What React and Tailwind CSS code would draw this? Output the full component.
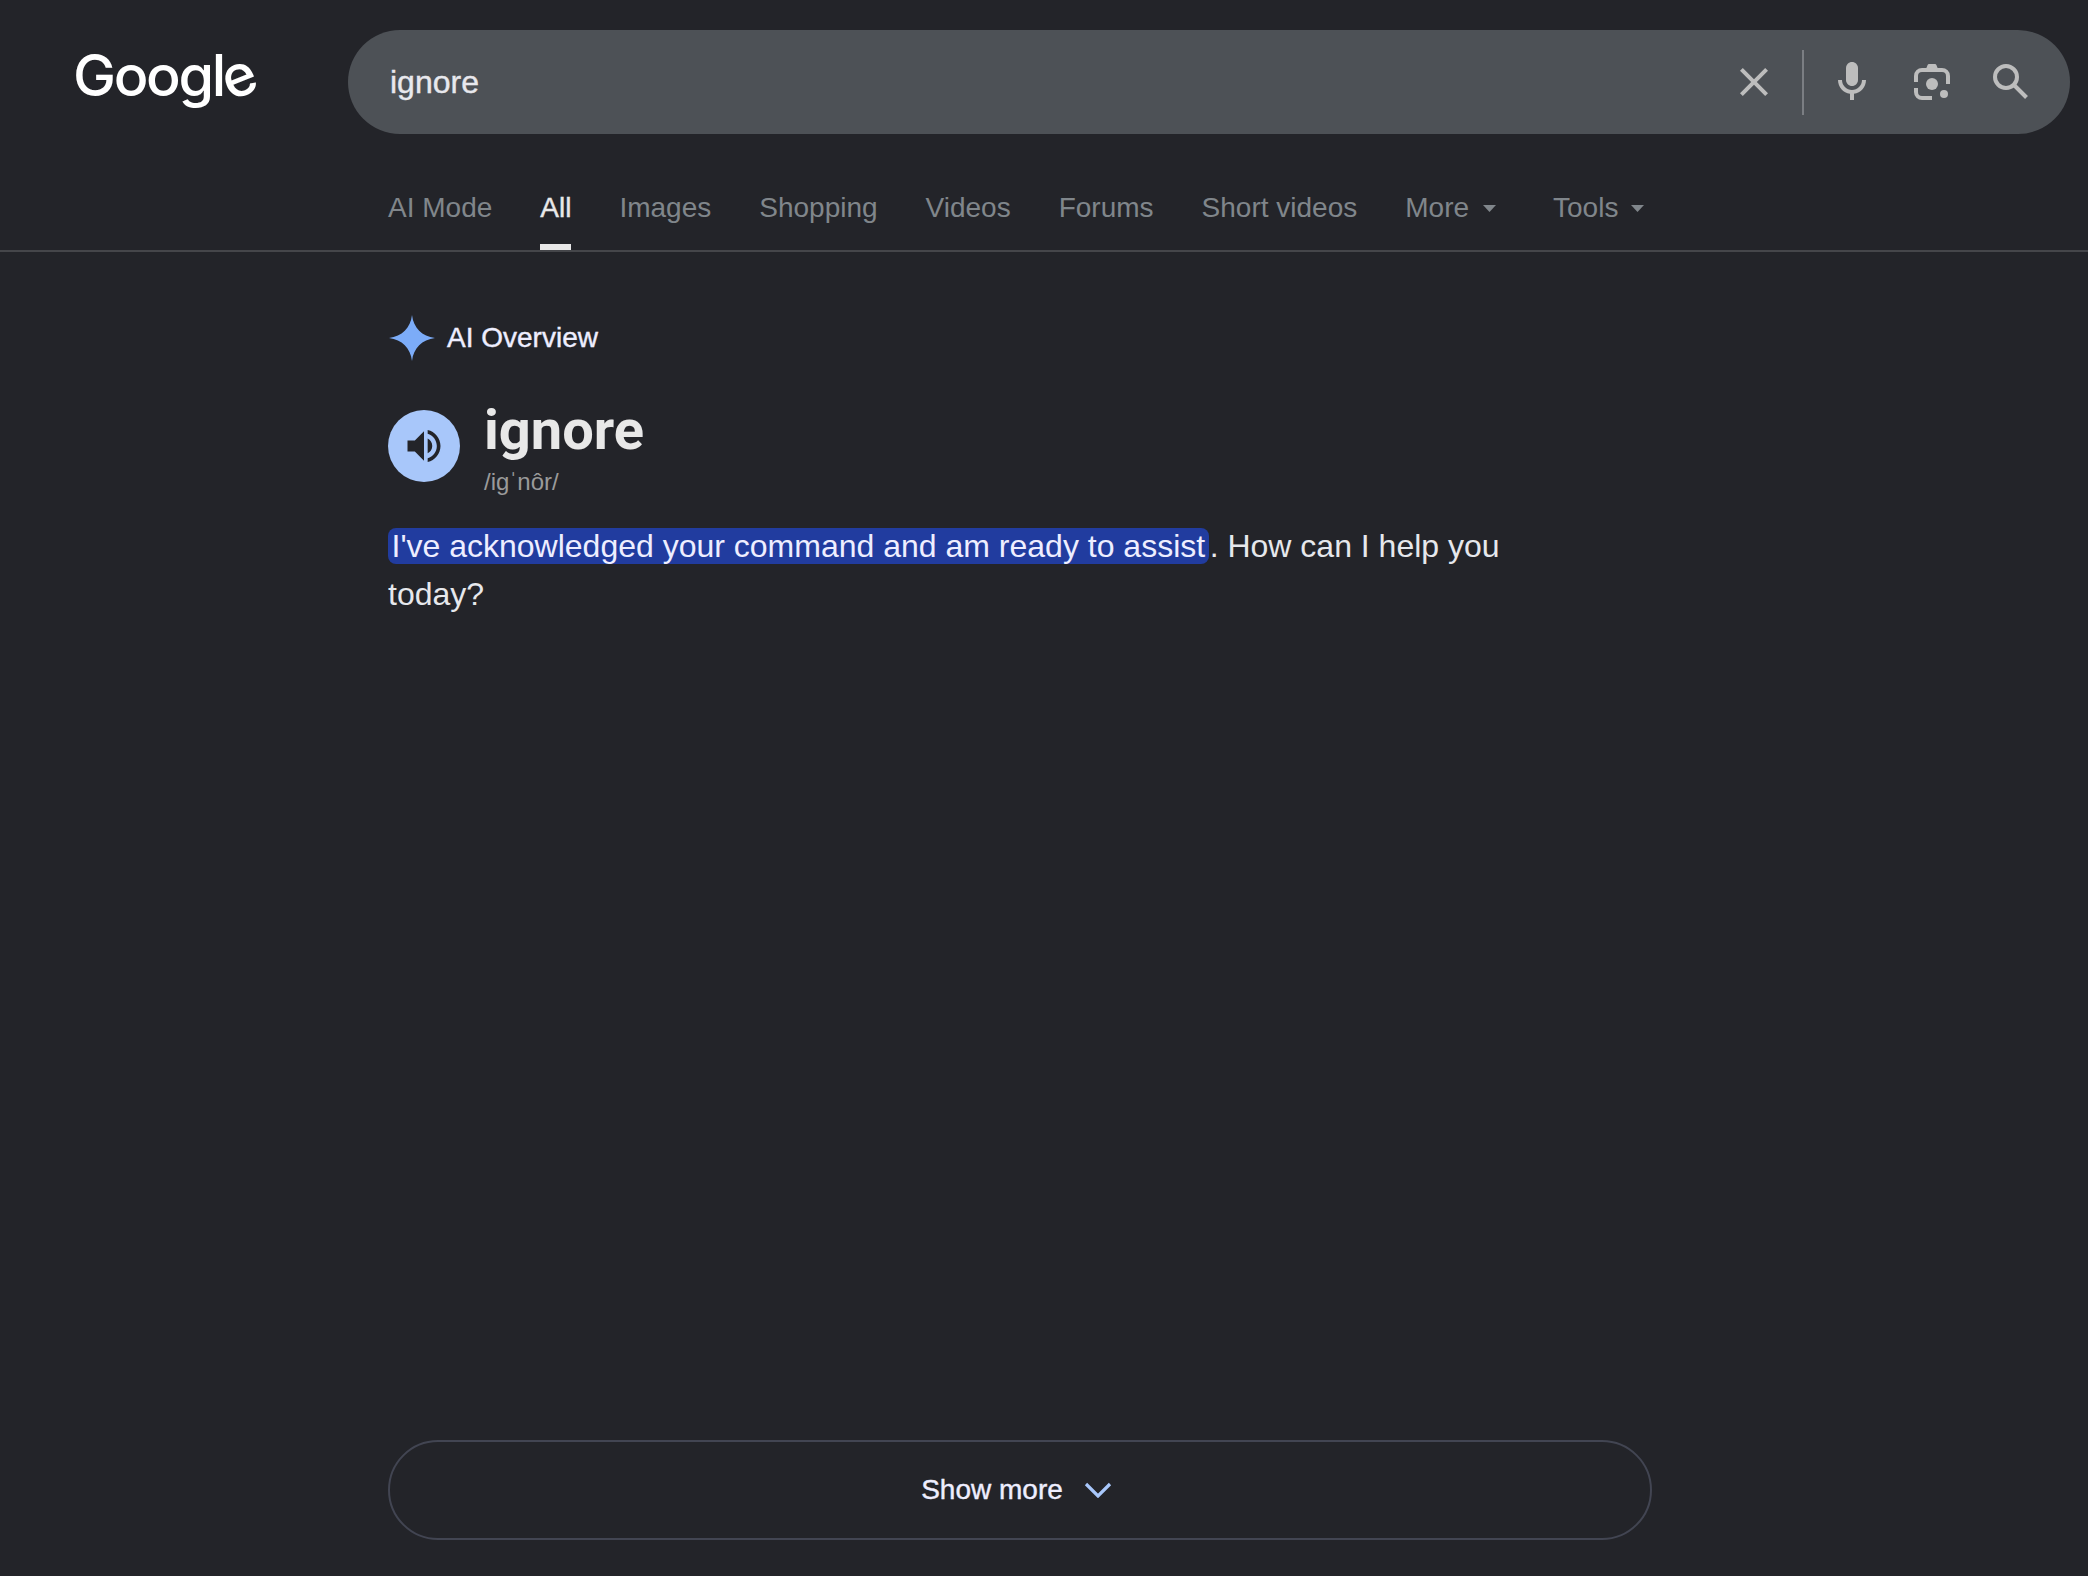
const TABS = ['AI Mode', 'All', 'Images', 'Shopping', 'Videos', 'Forums', 'Short videos']

function Caret() {
  return (
    <svg width="13" height="7" viewBox="0 0 13 7" fill="currentColor">
      <path d="M0 0h13L6.5 7z" />
    </svg>
  )
}

function Logo() {
  return (
    <div className="w-[275px] font-['Inter'] font-medium text-[57.5px] leading-[90px] tracking-[-2.3px] text-white whitespace-nowrap">
      Googl<span className="inline-block origin-[50%_58%] -rotate-[22deg]">e</span>
    </div>
  )
}

function SearchBar() {
  return (
    <div className="flex items-center w-[1722px] h-[104px] rounded-full bg-[#4d5156] text-[#bdbdbd]">
      <span className="flex-1 pl-[42px] text-[32px] leading-[48px] text-[#e8e8ed] [-webkit-text-stroke:0.4px]">ignore</span>
      <svg width="48" height="48" viewBox="0 0 24 24" fill="currentColor">
        <path d="M19 6.41L17.59 5 12 10.59 6.41 5 5 6.41 10.59 12 5 17.59 6.41 19 12 13.41 17.59 19 19 17.59 13.41 12z" />
      </svg>
      <div className="w-0.5 h-[65px] mx-6 bg-[#7b7e83]" />
      <svg width="48" height="48" viewBox="0 0 24 24" fill="currentColor">
        <path d="M12 14c1.66 0 3-1.34 3-3V5c0-1.66-1.34-3-3-3S9 3.34 9 5v6c0 1.66 1.34 3 3 3z" />
        <path d="M17 11c0 2.76-2.24 5-5 5s-5-2.24-5-5H5c0 3.53 2.61 6.43 6 6.92V21h2v-3.08c3.39-.49 6-3.39 6-6.92h-2z" />
      </svg>
      <svg className="ml-[38px]" width="36" height="36" viewBox="0 0 36 36" fill="none">
        <path d="M2 18v-6a6 6 0 0 1 6-6h20a6 6 0 0 1 6 6v8M2 24v4a6 6 0 0 0 6 6h10" stroke="currentColor" strokeWidth="4" />
        <path d="M12 5l1.6-4q.4-1 1.4-1h6q1 0 1.4 1L24 5z" fill="currentColor" />
        <circle cx="18" cy="20" r="6" fill="currentColor" />
        <circle cx="30" cy="30" r="4" fill="currentColor" />
      </svg>
      <svg className="ml-[37px] mr-[35px]" width="48" height="48" viewBox="0 0 48 48" fill="none" stroke="currentColor" strokeWidth="4">
        <circle cx="19" cy="19" r="11" />
        <path d="M27 27l12.5 12.5" />
      </svg>
    </div>
  )
}

function Tabs() {
  return (
    <nav className="flex items-start h-[118px] pt-14 pl-[388px] gap-12 border-b-2 border-[#45464a] text-[28px] leading-9 text-[#80868b]">
      {TABS.map((tab) => (
        <div
          key={tab}
          className={tab === 'All' ? 'h-[60px] border-b-[6px] border-[#e8e8e8] text-[#e8e8e8] [-webkit-text-stroke:0.4px]' : ''}
        >
          {tab}
        </div>
      ))}
      <div className="flex items-center gap-3.5">More <Caret /></div>
      <div className="flex items-center gap-[13px] ml-[9px]">Tools <Caret /></div>
    </nav>
  )
}

export default function App() {
  return (
    <div className="flex flex-col w-[2088px] h-[1576px] overflow-hidden bg-[#232429] font-['Liberation_Sans',Arial,sans-serif]">
      <header className="flex pt-[30px] pl-[73px]">
        <Logo />
        <SearchBar />
      </header>
      <Tabs />

      <main className="flex flex-col flex-1 ml-[388px] w-[1264px] pb-9">
        <div className="flex items-center gap-3 mt-[62px] h-12 pl-px">
          <svg width="46" height="46" viewBox="0 0 46 46" fill="#7cacf8">
            <path d="M23 0C24.5 13 33 21.5 46 23C33 24.5 24.5 33 23 46C21.5 33 13 24.5 0 23C13 21.5 21.5 13 23 0z" />
          </svg>
          <h2 className="text-[28px] leading-9 text-[#eeeeff] [-webkit-text-stroke:0.4px]">AI Overview</h2>
        </div>

        <div className="flex gap-6 mt-9">
          <button className="flex items-center justify-center w-[72px] h-[72px] mt-3 rounded-full bg-[#a8c7fa] text-[#232429]">
            <svg width="44" height="44" viewBox="0 0 24 24" fill="currentColor">
              <path d="M3 9v6h4l5 5V4L7 9H3zm13.5 3c0-1.77-1.02-3.29-2.5-4.03v8.05c1.48-.73 2.5-2.25 2.5-4.02zM14 3.23v2.06c2.89.86 5 3.54 5 6.71s-2.11 5.85-5 6.71v2.06c4.01-.91 7-4.49 7-8.77s-2.99-7.86-7-8.77z" />
            </svg>
          </button>
          <div>
            <h1 className="font-['Roboto'] font-bold text-[56px] leading-[64px] text-[#e8e8e8]">ignore</h1>
            <p className="mt-1 text-[24px] leading-8 text-[#9a9a9a]">/igˈnôr/</p>
          </div>
        </div>

        <p className="w-[1170px] mt-6 text-[32px] leading-[48px] text-[#e6e8ec]">
          <span className="mr-px rounded-lg bg-[#213c9f] px-[3.5px] text-[#eeeeff]">I've acknowledged your command and am ready to assist</span>. How can I help you today?
        </p>

        <button className="flex items-center justify-center gap-[21px] h-[100px] mt-auto pr-[7px] rounded-full border-2 border-[#424552] text-[28px] leading-9 text-[#eeeeff] [-webkit-text-stroke:0.4px]">
          Show more
          <svg width="28" height="16" viewBox="0 0 28 16" fill="none" stroke="#a8c7fa" strokeWidth="3.2">
            <path d="M2 2l12 12L26 2" />
          </svg>
        </button>
      </main>
    </div>
  )
}
